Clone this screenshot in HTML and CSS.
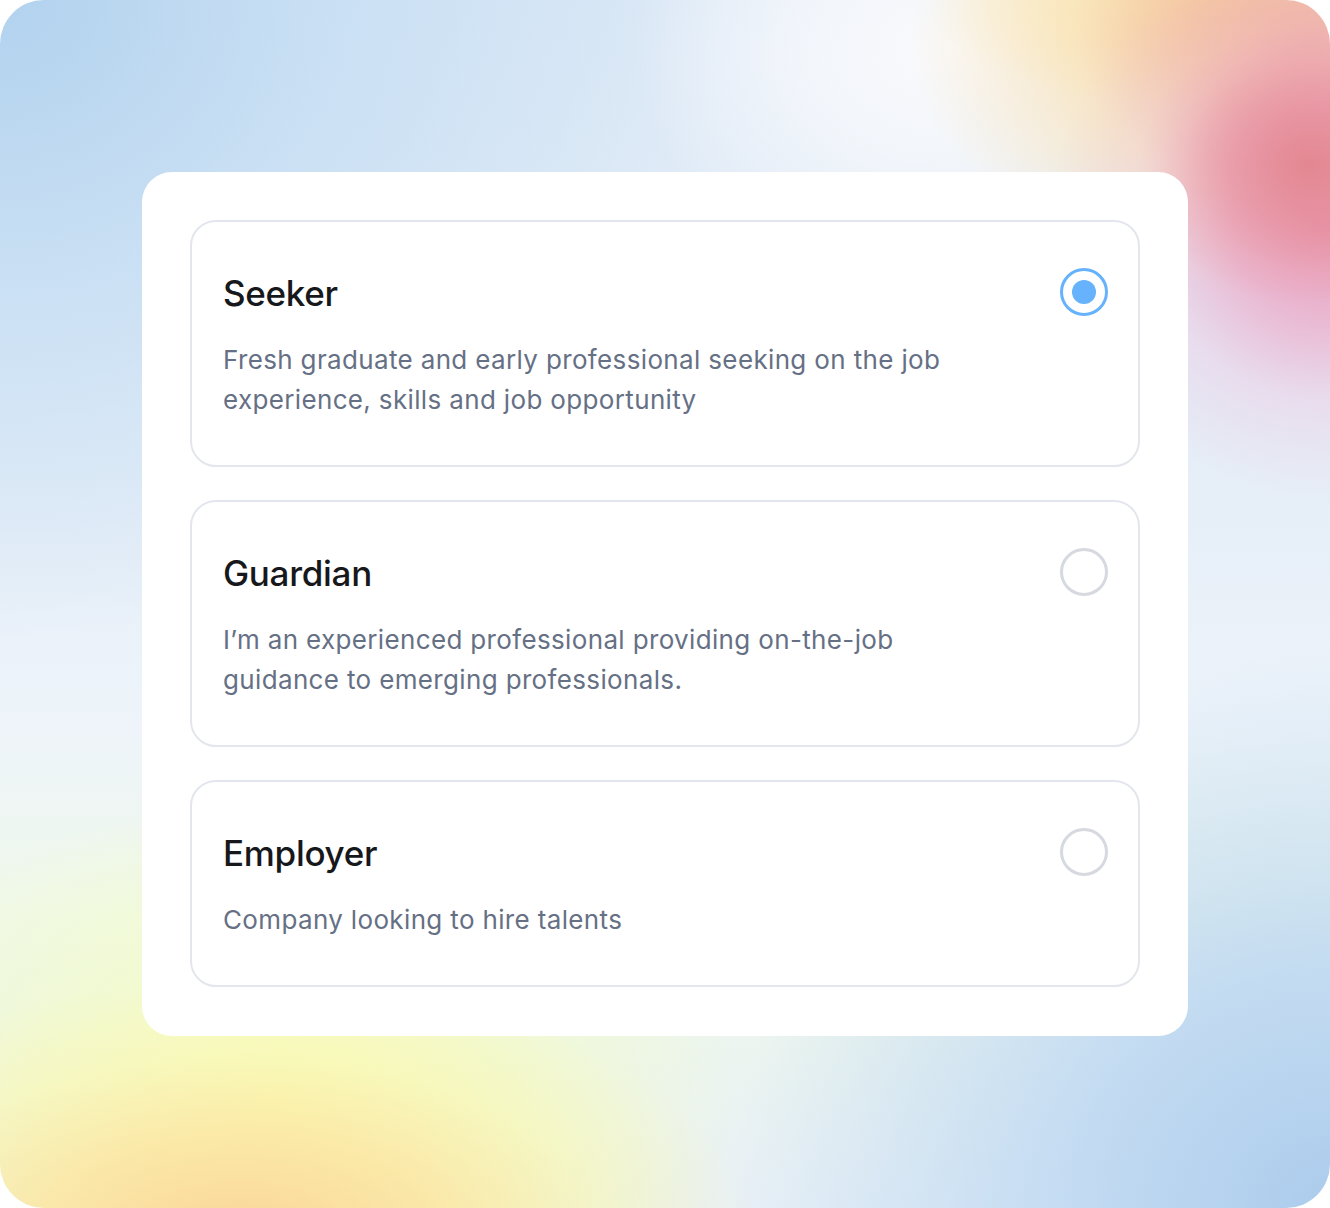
FILE: index.html
```html
<!DOCTYPE html>
<html lang="en">
<head>
<meta charset="utf-8">
<title>Choose role</title>
<link rel="stylesheet" href="styles.css">
</head>
<body>
<div class="stage">
  <div class="panel">
    <label class="option is-selected">
      <div class="option-text">
        <div class="option-title">Seeker</div>
        <div class="option-desc">Fresh graduate and early professional seeking on the job<br>experience, skills and job opportunity</div>
      </div>
      <span class="radio"><span class="radio-dot"></span></span>
    </label>
    <label class="option">
      <div class="option-text">
        <div class="option-title">Guardian</div>
        <div class="option-desc">I’m an experienced professional providing on-the-job<br>guidance to emerging professionals.</div>
      </div>
      <span class="radio"></span>
    </label>
    <label class="option">
      <div class="option-text">
        <div class="option-title">Employer</div>
        <div class="option-desc">Company looking to hire talents</div>
      </div>
      <span class="radio"></span>
    </label>
  </div>
</div>
</body>
</html>
```
FILE: styles.css
```css
html, body {
  margin: 0;
  padding: 0;
  background: #ffffff;
}
body {
  font-family: Inter, "Liberation Sans", sans-serif;
}
.stage {
  width: 1330px;
  height: 1208px;
  border-radius: 44px;
  overflow: hidden;
  box-sizing: border-box;
  padding: 172px 142px 0 142px;
  background:
    radial-gradient(ellipse 170px 140px at 1310px 165px, rgba(226,132,142,0.9) 0%, rgba(228,136,150,0.55) 45%, rgba(230,140,160,0.2) 75%, rgba(230,140,160,0) 100%),
    radial-gradient(ellipse 280px 280px at 1330px 220px, rgba(234,142,172,0.85) 0%, rgba(237,156,190,0.65) 35%, rgba(240,190,220,0.35) 65%, rgba(240,210,235,0) 100%),
    radial-gradient(ellipse 400px 260px at 1310px 40px, rgba(238,170,150,0.95) 0%, rgba(243,190,156,0.85) 30%, rgba(250,224,176,0.65) 60%, rgba(253,240,200,0) 100%),
    radial-gradient(ellipse 280px 110px at 1210px 0px, rgba(253,238,174,0.95) 0%, rgba(253,240,190,0.5) 60%, rgba(253,240,190,0) 100%),
    radial-gradient(ellipse 320px 230px at 950px 50px, rgba(250,250,252,1) 0%, rgba(246,248,252,0.8) 50%, rgba(240,245,250,0) 100%),
    radial-gradient(ellipse 520px 260px at 240px 1240px, rgba(250,212,152,1) 0%, rgba(252,230,162,0.85) 40%, rgba(250,246,175,0.5) 70%, rgba(245,250,190,0) 100%),
    radial-gradient(ellipse 460px 300px at 280px 1100px, rgba(250,253,184,0.95) 0%, rgba(244,252,196,0.6) 55%, rgba(240,250,210,0) 100%),
    radial-gradient(ellipse 600px 560px at 1330px 1208px, rgba(172,204,236,1) 0%, rgba(190,216,242,0.85) 45%, rgba(205,225,245,0) 100%),
    radial-gradient(ellipse 720px 640px at 0px 0px, rgba(178,210,238,1) 0%, rgba(196,221,243,0.8) 45%, rgba(215,230,246,0) 100%),
    linear-gradient(to bottom, #dde9f6 0%, #e7eff8 45%, #eef4fa 60%, #eff8ea 76%, #e8f0f6 100%);
}
.panel {
  background: #ffffff;
  border-radius: 30px;
  width: 1046px;
  height: 864px;
  box-sizing: border-box;
  padding: 48px;
  display: flex;
  flex-direction: column;
  gap: 33px;
}
.option {
  display: flex;
  align-items: flex-start;
  justify-content: space-between;
  border: 2px solid #e3e6ec;
  border-radius: 26px;
  padding: 46px 30px 45px 31px;
  cursor: pointer;
}
.option-text {
  display: flex;
  flex-direction: column;
  gap: 23px;
  padding-top: 1px;
}
.option-title {
  font-size: 35px;
  line-height: 48px;
  font-weight: 500;
  color: #17181c;
  letter-spacing: -0.3px;
}
.option-desc {
  font-size: 26px;
  line-height: 40px;
  color: #667085;
  letter-spacing: 0.35px;
}
.radio {
  width: 48px;
  height: 48px;
  box-sizing: border-box;
  border-radius: 50%;
  border: 3px solid #d7d9e1;
  display: flex;
  align-items: center;
  justify-content: center;
  flex-shrink: 0;
}
.is-selected .radio {
  border-color: #66b2fd;
}
.radio-dot {
  width: 24px;
  height: 24px;
  border-radius: 50%;
  background: #66b2fd;
}
```
